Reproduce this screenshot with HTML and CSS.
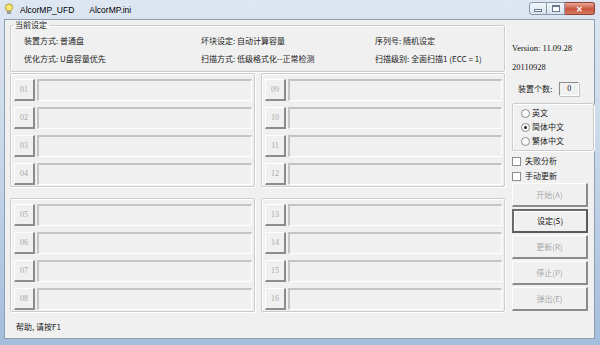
FILE: index.html
```html
<!DOCTYPE html>
<html lang="zh-CN">
<head>
    <meta charset="UTF-8">
    <title>AlcorMP_UFD</title>
    <link rel="stylesheet" href="styles.css">
</head>
<body>
    <div class="window">
        <div class="titlebar">
            <svg class="app-icon" width="10" height="13" viewBox="0 0 10 13">
                <circle cx="5" cy="4.5" r="3.6" fill="#f7ea7a" stroke="#b59a2a" stroke-width="1"/>
                <rect x="3" y="8" width="4" height="3" fill="#9c9c9c"/>
            </svg>
            <span class="title">AlcorMP_UFD</span>
            <span class="title">AlcorMP.ini</span>
            <div class="caption-btns">
                <span class="cap-btn"><i class="ico-min"></i></span>
                <span class="cap-btn"><i class="ico-max"></i></span>
                <span class="cap-btn close">&#x2715;</span>
            </div>
        </div>

        <div class="client">
            <div class="main">
                <fieldset class="group settings">
                    <legend>当前设定</legend>
                    <div class="settings-grid">
                        <span>装置方式: 普通盘</span>
                        <span>坏块设定: 自动计算容量</span>
                        <span>序列号: 随机设定</span>
                        <span>优化方式: U盘容量优先</span>
                        <span>扫描方式: 低级格式化--正常检测</span>
                        <span>扫描级别: 全面扫描1 (ECC = 1)</span>
                    </div>
                </fieldset>

                <div class="ports">
                    <div class="group port-group">
                        <div class="port"><span class="port-btn">01</span><span class="port-field"></span></div>
                        <div class="port"><span class="port-btn">02</span><span class="port-field"></span></div>
                        <div class="port"><span class="port-btn">03</span><span class="port-field"></span></div>
                        <div class="port"><span class="port-btn">04</span><span class="port-field"></span></div>
                    </div>
                    <div class="group port-group">
                        <div class="port"><span class="port-btn">09</span><span class="port-field"></span></div>
                        <div class="port"><span class="port-btn">10</span><span class="port-field"></span></div>
                        <div class="port"><span class="port-btn">11</span><span class="port-field"></span></div>
                        <div class="port"><span class="port-btn">12</span><span class="port-field"></span></div>
                    </div>
                    <div class="group port-group">
                        <div class="port"><span class="port-btn">05</span><span class="port-field"></span></div>
                        <div class="port"><span class="port-btn">06</span><span class="port-field"></span></div>
                        <div class="port"><span class="port-btn">07</span><span class="port-field"></span></div>
                        <div class="port"><span class="port-btn">08</span><span class="port-field"></span></div>
                    </div>
                    <div class="group port-group">
                        <div class="port"><span class="port-btn">13</span><span class="port-field"></span></div>
                        <div class="port"><span class="port-btn">14</span><span class="port-field"></span></div>
                        <div class="port"><span class="port-btn">15</span><span class="port-field"></span></div>
                        <div class="port"><span class="port-btn">16</span><span class="port-field"></span></div>
                    </div>
                </div>

                <div class="status">帮助, 请按F1</div>
            </div>

            <div class="side">
                <div class="version">Version: 11.09.28</div>
                <div class="version date">20110928</div>
                <div class="count">
                    <span>装置个数:</span>
                    <span class="count-box">0</span>
                </div>
                <div class="group lang">
                    <label class="opt"><span class="radio"></span>英文</label>
                    <label class="opt"><span class="radio on"></span>简体中文</label>
                    <label class="opt"><span class="radio"></span>繁体中文</label>
                </div>
                <div class="checks">
                    <label class="opt"><span class="check"></span>失败分析</label>
                    <label class="opt"><span class="check"></span>手动更新</label>
                </div>
                <div class="buttons">
                    <span class="btn disabled">开始(A)</span>
                    <span class="btn default">设定(S)</span>
                    <span class="btn disabled">更新(R)</span>
                    <span class="btn disabled">停止(P)</span>
                    <span class="btn disabled">弹出(E)</span>
                </div>
            </div>
        </div>
    </div>
</body>
</html>
```

FILE: styles.css
```css
body {
    margin: 0;
    font: 8px/12px "Noto Sans CJK SC", "Liberation Sans", sans-serif;
    color: #1a1a1a;
}
.window {
    width: 600px;
    height: 345px;
    box-sizing: border-box;
    padding: 0 5px 6px 4px;
    display: flex;
    flex-direction: column;
    background: linear-gradient(#dde6f1, #cbd9ea 40%, #a3bddd);
}
.titlebar {
    height: 19px;
    display: flex;
    align-items: center;
}
.app-icon {
    margin: 0 6px 0 0;
}
.title {
    font: 8.5px/12px "Liberation Sans", sans-serif;
    color: #000;
    margin-right: 15px;
}
.caption-btns {
    margin-left: auto;
    align-self: flex-start;
    display: flex;
    margin-top: 2px;
}
.cap-btn {
    width: 18px;
    height: 13px;
    border: 1px solid #8796ab;
    background: linear-gradient(#f2f6fa, #d9e3ee);
    display: flex;
    align-items: center;
    justify-content: center;
    box-sizing: border-box;
}
.cap-btn + .cap-btn {
    border-left: none;
}
.caption-btns .cap-btn:first-child {
    border-radius: 3px 0 0 3px;
}
.cap-btn.close {
    width: 30px;
    background: linear-gradient(#e9a898, #c8553e 55%, #d97a62);
    color: #fff;
    font-size: 8px;
    font-weight: bold;
    border-color: #8f4332;
    border-radius: 0 3px 3px 0;
}
.ico-min {
    width: 6px;
    height: 1px;
    margin-top: 4px;
    border: 1px solid #66768c;
    background: #fff;
}
.ico-max {
    width: 6px;
    height: 4px;
    border: 1px solid #66768c;
    border-top-width: 2px;
    background: #fff;
}
.client {
    flex: 1;
    background: #f0f0f0;
    border: 1px solid #8f9db1;
    display: flex;
}
.main {
    width: 495px;
    padding-left: 5px;
    display: flex;
    flex-direction: column;
}
.group {
    border: 1px solid #cbcbcb;
    border-radius: 2px;
    box-shadow: inset 1px 1px 0 #fff, 1px 1px 0 #fff;
}
fieldset.settings {
    margin: 0;
    padding: 0 0 6px 13px;
    min-inline-size: auto;
}
.settings legend {
    padding: 0 2px;
    margin-left: -11px;
    line-height: 10px;
}
.settings-grid {
    display: grid;
    grid-template-columns: 177px 174px 1fr;
    row-gap: 6px;
    padding-top: 5px;
    white-space: nowrap;
}
.ports {
    display: grid;
    grid-template-columns: 245px 244px;
    column-gap: 6px;
    row-gap: 11px;
    margin-top: 1px;
}
.port-group {
    padding: 5px 2px 1px 3px;
    display: flex;
    flex-direction: column;
    gap: 6px;
}
.port {
    display: flex;
    height: 22px;
    gap: 2px;
}
.port-btn {
    width: 21px;
    box-sizing: border-box;
    border: 1px solid #fff;
    border-right: 2px solid #8c8c8c;
    border-bottom: 2px solid #8c8c8c;
    background: #f0f0f0;
    color: #a8a8a8;
    font: 8px "Liberation Serif", serif;
    display: flex;
    align-items: center;
    justify-content: center;
}
.port-field {
    flex: 1;
    border-top: 2px solid #c4c4c4;
    border-left: 2px solid #c4c4c4;
    border-right: 1px solid #fff;
    border-bottom: 1px solid #fff;
    background: #f0f0f0;
}
.status {
    margin: 9px 0 0 6px;
}
.side {
    flex: 1;
    padding: 22px 0 0 7px;
    display: flex;
    flex-direction: column;
}
.version {
    font: 8.5px/12px "Liberation Serif", serif;
    color: #111;
}
.date {
    margin-top: 7px;
}
.count {
    display: flex;
    align-items: center;
    height: 14px;
    margin: 9px 0 0 6px;
    gap: 7px;
}
.count-box {
    width: 20px;
    height: 14px;
    box-sizing: border-box;
    border: 1px solid #8a8a8a;
    border-right-color: #fff;
    border-bottom-color: #fff;
    box-shadow: 1px 1px 0 #c4c4c4;
    font: 8px/12px "Liberation Serif", serif;
    color: #111;
    text-align: center;
}
.lang {
    margin-top: 7px;
    width: 82px;
    height: 48px;
    box-sizing: border-box;
    padding: 2px 0 0 8px;
    display: flex;
    flex-direction: column;
}
.opt {
    display: flex;
    align-items: center;
    gap: 2px;
    height: 14px;
}
.radio {
    width: 7px;
    height: 7px;
    border-radius: 50%;
    border: 1px solid #8d8d8d;
    background: #fafafa;
    position: relative;
}
.radio.on::after {
    content: "";
    position: absolute;
    left: 2px;
    top: 2px;
    width: 3px;
    height: 3px;
    border-radius: 50%;
    background: #222;
}
.checks {
    margin-top: 3px;
    display: flex;
    flex-direction: column;
    gap: 1px;
}
.check {
    width: 7px;
    height: 7px;
    margin-right: 2px;
    border: 1px solid #8d8d8d;
    background: #fff;
}
.buttons {
    display: flex;
    flex-direction: column;
    gap: 2px;
    width: 76px;
}
.btn {
    height: 24px;
    box-sizing: border-box;
    display: flex;
    align-items: center;
    justify-content: center;
    border: 1px solid #fff;
    border-right: 2px solid #8c8c8c;
    border-bottom: 2px solid #8c8c8c;
    background: #f0f0f0;
}
.btn.disabled {
    color: #a8a8a8;
}
.btn.default {
    border: 2px solid #5a5a5a;
    border-top-color: #6a6a6a;
    border-left-color: #6a6a6a;
    box-shadow: inset 1px 1px 0 #fff;
    color: #111;
}
```
